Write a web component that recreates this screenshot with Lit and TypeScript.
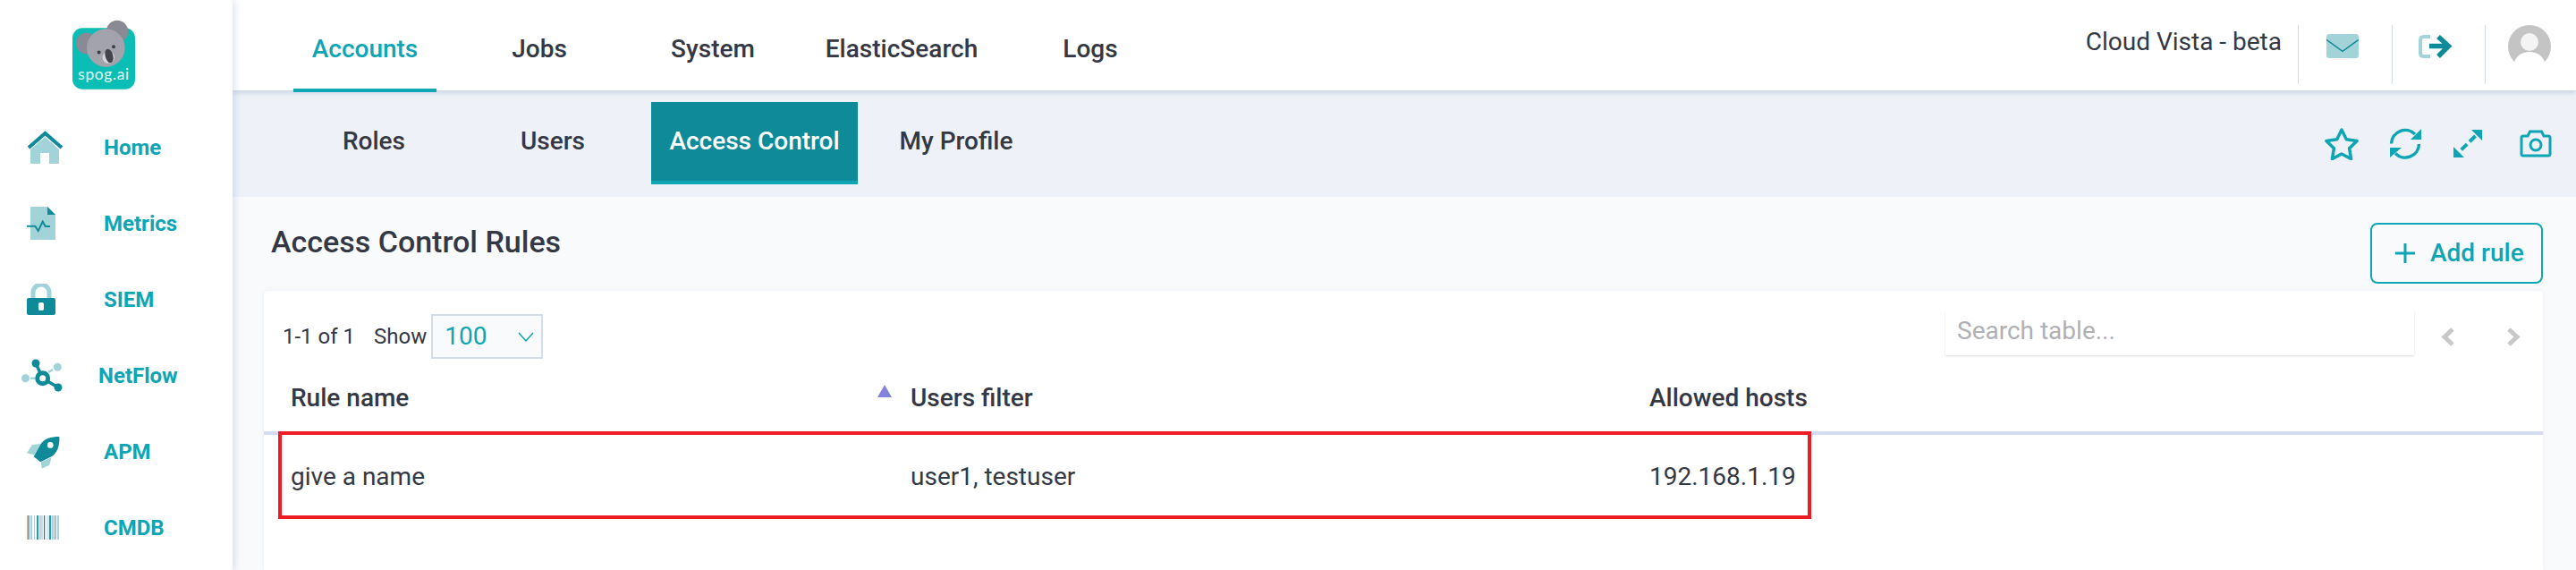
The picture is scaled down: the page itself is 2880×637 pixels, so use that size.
import { css, html, LitElement, svg } from 'lit';
import { customElement } from 'lit/decorators.js';

// [width, colour] runs of the barcode icon, left to right
const barcode: [number, string][] = [
  [1, '#c9b79c'], [2, '#7fa9b8'], [1, '#fff'], [2, '#a9cfe8'], [2, '#fff'], [1, '#a9cfe8'], [2, '#fff'],
  [2, '#0ea5b4'], [1, '#fff'], [2, '#d9c9d4'], [2, '#c4dff0'], [1, '#fff'], [1.500, '#0e8a98'], [2, '#fff'],
  [1, '#a9cfe8'], [1.500, '#e4e4ec'], [2, '#0ea5b4'], [1, '#fff'], [2, '#a9cfe8'], [1, '#fff'], [1.500, '#5f9fb4'],
  [1, '#fff'], [5, '#a9d8e4'],
];

const barcodeRects = () => {
  let x = 0;
  return barcode.map(([w, fill]) => {
    const rect = svg`<rect x=${x} width=${w} height="27" fill=${fill} />`;
    x += w;
    return rect;
  });
};

const navItems = [
  { label: 'Home', icon: svg`<svg class="ico" style="width:41px;height:37px" viewBox="0 0 41 37"><path d="M20.5 7 36 21v14.5q0 1.5-1.500 1.500H25V25H15v12H5.500Q4 37 4 35.500V21Z" fill="#a2d3d8"/><path d="M2 19 20.500 3 39 19" fill="none" stroke="#0e8a98" stroke-width="4"/></svg>` },
  { label: 'Metrics', icon: svg`<svg class="ico" style="width:32px;height:37px" viewBox="0 0 32 37"><path d="M4 1q0-1 1-1h18l9 9v27q0 1-1 1H5q-1 0-1-1Z" fill="#a2d3d8"/><path d="M23 0l9 9h-9Z" fill="#0e8a98"/><path d="M0 21.700h9.300L12.700 27l5-10.300 3 5.300H26" fill="none" stroke="#0e8a98" stroke-width="2"/></svg>` },
  { label: 'SIEM', icon: svg`<svg class="ico" style="width:32px;height:35px" viewBox="0 0 32 35"><path d="M7 17v-7a9 9 0 0 1 18 0v7" fill="none" stroke="#a2d3d8" stroke-width="5"/><rect y="16" width="32" height="19" rx="2" fill="#0e8a98"/><rect x="13" y="21" width="6" height="9" rx="2" fill="#fff"/></svg>` },
  { label: 'NetFlow', shift: true, icon: svg`<svg class="ico" style="width:46px;height:37px" viewBox="0 0 46 37"><circle cx="4.500" cy="21.700" r="4.500" fill="#a2d3d8"/><circle cx="40.300" cy="9.300" r="4.500" fill="#a2d3d8"/><path d="M10 21.700h5M30 15l5-3" stroke="#a2d3d8" stroke-width="2.500"/><path d="M16 5l7.700 16.700L41 32" fill="none" stroke="#0e8a98" stroke-width="3.500"/><circle cx="16" cy="5" r="4.500" fill="#0e8a98"/><circle cx="41" cy="32" r="4.500" fill="#0e8a98"/><circle cx="23.700" cy="21.700" r="6" fill="#fff" stroke="#0e8a98" stroke-width="5"/></svg>` },
  { label: 'APM', icon: svg`<svg class="ico" style="width:37px;height:38px" viewBox="90 450 110 113"><path d="M90 510 108 483 135 480 115 517ZM137 540 172 525 165 550 140 562Z" fill="#a2d3d8"/><path d="M198 456C170 456 148 462 135 482L113 522 135 540 172 522C192 510 200 482 198 456Z" fill="#0e8a98"/><circle cx="168" cy="484" r="10" fill="#fff"/></svg>` },
  { label: 'CMDB', icon: svg`<svg class="ico" style="width:36px;height:27px" viewBox="0 0 36 27">${barcodeRects()}</svg>` },
];

const mainTabs = [
  { label: 'Accounts', width: 160, active: true },
  { label: 'Jobs', width: 230 },
  { label: 'System', width: 158 },
  { label: 'ElasticSearch', width: 264 },
  { label: 'Logs', width: 158 },
];

const subTabs = [
  { label: 'Roles', width: 180 },
  { label: 'Users', width: 220 },
  { label: 'Access Control', width: 231, active: true },
  { label: 'My Profile', width: 220 },
];

@customElement('app-root')
export class AppRoot extends LitElement {
  static override styles = css`
    :host {
      display: grid;
      grid-template-columns: 260px 1fr;
      width: 2880px;
      height: 637px;
      overflow: hidden;
      background: #fff;
      color: #343844;
      font-family: Roboto, 'Liberation Sans', sans-serif;
      font-size: 28px;
      line-height: 32px;
    }
    .sidebar {
      position: relative;
      z-index: 2;
      background: #fff;
      box-shadow: 2px 0 8px rgba(150, 170, 210, 0.35);
    }
    .logo-wrap {
      height: 122px;
      display: flex;
      justify-content: flex-start;
      padding: 22px 0 0 80px;
      box-sizing: border-box;
    }
    .logo {
      width: 72px;
      height: 79px;
    }
    .nav-item {
      height: 85px;
      display: grid;
      grid-template-columns: 92px 1fr;
      padding-left: 24px;
      align-items: center;
      color: #0ea5b4;
      font-size: 24px;
      font-weight: 700;
    }
    .nav-icon {
      display: flex;
      align-items: center;
      height: 100%;
    }
    .nav-icon .ico {
      margin-left: 6px;
    }
    .nav-item.shifted .ico {
      margin-left: 0;
    }
    .nav-item.shifted .nav-label {
      margin-left: -6px;
    }
    .main {
      display: flex;
      flex-direction: column;
      min-width: 0;
    }
    .topbar {
      position: relative;
      z-index: 1;
      height: 101px;
      display: flex;
      padding-left: 68px;
      background: #fff;
      box-shadow: 0 2px 6px rgba(150, 170, 200, 0.5);
      flex: none;
    }
    .main-tab {
      height: 103px;
      box-sizing: border-box;
      padding-top: 11px;
      display: flex;
      align-items: center;
      justify-content: center;
      border-bottom: 4px solid transparent;
      font-weight: 500;
    }
    .main-tab.active {
      color: #0ea5b4;
      border-bottom-color: #0ea5b4;
    }
    .top-right {
      margin-left: auto;
      display: flex;
      align-items: flex-start;
    }
    .project {
      padding-top: 31px;
      margin-right: 18px;
    }
    .top-cell {
      height: 66px;
      margin-top: 28px;
      border-left: 1px solid #d3dbe8;
      box-sizing: border-box;
      display: flex;
      align-items: flex-start;
    }
    .mail {
      width: 105px;
      padding: 10px 0 0 31px;
    }
    .logout {
      width: 104px;
      padding: 10px 0 0 29px;
    }
    .user {
      width: 102px;
      padding-left: 25px;
    }
    .subbar {
      flex: none;
      height: 119px;
      box-sizing: border-box;
      padding: 13px 27px 13px 68px;
      background: #eef1f8;
      display: flex;
      align-items: stretch;
    }
    .sub-tab {
      box-sizing: border-box;
      height: 92px;
      display: flex;
      align-items: center;
      justify-content: center;
      border-bottom: 4px solid transparent;
      font-weight: 500;
    }
    .sub-tab.active {
      background: #0e8a98;
      border-bottom-color: #0ea5b4;
      color: #fff;
    }
    .tools {
      margin-left: auto;
      display: flex;
      align-items: center;
    }
    .tools svg {
      display: block;
    }
    .tool-star {
      margin-right: 34px;
    }
    .tool-sync {
      margin-right: 36px;
    }
    .tool-expand {
      margin-right: 42px;
    }
    .content {
      flex: 1;
      display: flex;
      flex-direction: column;
      background: #f9fafc;
      min-height: 0;
    }
    .page-head {
      flex: none;
      height: 105px;
      box-sizing: border-box;
      padding: 29px 37px 0 43px;
      display: flex;
      justify-content: space-between;
      align-items: flex-start;
    }
    .page-title {
      margin: 1px 0 0;
      font-size: 34px;
      line-height: 40px;
      font-weight: 500;
    }
    .add-btn {
      width: 193px;
      height: 68px;
      box-sizing: border-box;
      border: 2px solid #0ea5b4;
      border-radius: 8px;
      display: flex;
      align-items: center;
      gap: 17px;
      padding-left: 26px;
      color: #0ea5b4;
      font-weight: 500;
    }
    .card {
      position: relative;
      flex: 1;
      margin: 0 37px 0 35px;
      background: #fff;
      border-radius: 4px 4px 0 0;
      box-shadow: 0 0 4px rgba(180, 190, 215, 0.25);
    }
    .toolbar {
      height: 100px;
      box-sizing: border-box;
      padding: 26px 25px 0 21px;
      display: flex;
      align-items: flex-start;
    }
    .count {
      height: 50px;
      display: flex;
      align-items: center;
      font-size: 24px;
    }
    .count-range {
      margin-right: 21px;
    }
    .select {
      width: 125px;
      height: 50px;
      margin-left: 5px;
      box-sizing: border-box;
      border: 2px solid #d5dce9;
      background: #f9fafc;
      display: flex;
      align-items: center;
      justify-content: space-between;
      padding: 0 8px 0 13px;
      color: #0ea5b4;
    }
    .search {
      margin: -4px 0 0 auto;
      width: 524px;
      height: 50px;
      box-sizing: border-box;
      padding: 7px 13px 0;
      color: #b0b0b5;
      background: #fff;
      box-shadow: 0 1px 2px rgba(120, 120, 130, 0.25);
    }
    .pager {
      display: flex;
      align-items: center;
      gap: 57px;
      height: 50px;
      margin-left: 30px;
    }
    .thead,
    .row {
      display: grid;
      grid-template-columns: 723px 826px 1fr;
    }
    .thead {
      height: 61px;
      box-sizing: border-box;
      padding-top: 4px;
      border-bottom: 4px solid #d5dcef;
      font-weight: 500;
      align-items: start;
    }
    .cell {
      padding-left: 30px;
    }
    .cell + .cell {
      padding-left: 0;
    }
    .sorted {
      display: flex;
      justify-content: space-between;
      padding-right: 21px;
    }
    .sort-mark {
      width: 0;
      height: 0;
      margin-top: 1px;
      border-left: 8.500px solid transparent;
      border-right: 8.500px solid transparent;
      border-bottom: 14px solid #8484dc;
    }
    .row {
      height: 94px;
      align-items: center;
    }
    .highlight {
      position: absolute;
      left: 16px;
      top: 157px;
      width: 1714px;
      height: 98px;
      box-sizing: border-box;
      border: 4px solid #ed1c24;
      pointer-events: none;
    }
  `;

  override render() {
    return html`
      <aside class="sidebar">
        <div class="logo-wrap">
          <svg class="logo" viewBox="240 66 216 236">
            <rect x="243" y="93" width="210" height="206" rx="34" fill="#0abdb5" />
            <circle cx="290" cy="145" r="35" fill="#8a8a94" />
            <circle cx="393" cy="105" r="37" fill="#8a8a94" />
            <circle cx="355" cy="160" r="64" fill="#a3a3ad" />
            <circle cx="332" cy="175" r="6" fill="#3f3f4c" />
            <circle cx="381" cy="156" r="6" fill="#3f3f4c" />
            <circle cx="364" cy="192" r="20" fill="#d5d5da" />
            <ellipse cx="366" cy="187" rx="13" ry="24" transform="rotate(-15 366 187)" fill="#44444f" />
            <text x="348" y="268" text-anchor="middle" font-family="Lato, sans-serif" font-size="52" fill="#e6fbfa" letter-spacing="2">spog.ai</text>
          </svg>
        </div>
        ${navItems.map(
          item => html`
            <div class="nav-item ${item.shift ? 'shifted' : ''}">
              <div class="nav-icon">${item.icon}</div>
              <div class="nav-label">${item.label}</div>
            </div>
          `
        )}
      </aside>
      <div class="main">
        <header class="topbar">
          ${mainTabs.map(
            tab => html`<div class="main-tab ${tab.active ? 'active' : ''}" style="width:${tab.width}px">${tab.label}</div>`
          )}
          <div class="top-right">
            <div class="project">Cloud Vista - beta</div>
            <div class="top-cell mail">
              <svg width="36" height="27" viewBox="0 0 36 27">
                <rect width="36" height="27" rx="3" fill="#a2d3d8" />
                <path d="M0 6.300 18 19.300 36 6.300" fill="none" stroke="#0e8a98" stroke-width="1.500" />
              </svg>
            </div>
            <div class="top-cell logout">
              <svg width="38" height="28" viewBox="0 0 38 28">
                <path d="M13 3H6Q2 3 2 7V21Q2 25 6 25H13" fill="none" stroke="#a2d3d8" stroke-width="4" />
                <path d="M12 13.500H33M22 3 33.500 13.500 22 25" fill="none" stroke="#0e8a98" stroke-width="5.500" />
              </svg>
            </div>
            <div class="top-cell user">
              <svg width="48" height="43" viewBox="0 0 48 43">
                <circle cx="24" cy="24" r="24" fill="#c4c4c4" />
                <circle cx="24" cy="19" r="10" fill="#f4f4f4" />
                <ellipse cx="24" cy="44" rx="17" ry="14" fill="#fff" />
              </svg>
            </div>
          </div>
        </header>
        <nav class="subbar">
          ${subTabs.map(
            tab => html`<div class="sub-tab ${tab.active ? 'active' : ''}" style="width:${tab.width}px">${tab.label}</div>`
          )}
          <div class="tools">
            <svg class="tool-star" width="38" height="36" viewBox="0 0 38 36">
              <path d="M19 2 24.300 12.700 36.100 14.400 27.600 22.800 29.600 34.600 19 29 8.400 34.600 10.400 22.800 1.900 14.400 13.700 12.700Z" fill="none" stroke="#0ea5b4" stroke-width="3.500" stroke-linejoin="round" />
            </svg>
            <svg class="tool-sync" width="36" height="35" viewBox="0 0 36 35">
              <path d="M2.500 17.500A15.500 15.500 0 0 1 29 7M33.500 18A15.500 15.500 0 0 1 7 28.500" fill="none" stroke="#0ea5b4" stroke-width="3.500" />
              <path d="M24 13H36V1ZM1 33V22H14Z" fill="#0ea5b4" />
            </svg>
            <svg class="tool-expand" width="32" height="31" viewBox="0 0 32 31">
              <path d="M32 0V12L20 0ZM0 31V19L12 31Z" fill="#0ea5b4" />
              <path d="M24.500 7 6.500 24.500" stroke="#0ea5b4" stroke-width="4" stroke-dasharray="9 4 9" />
            </svg>
            <svg width="36" height="31" viewBox="0 0 36 31">
              <path d="M2 9Q2 7 4 7H9L11.500 2H24.500L27 7H32Q34 7 34 9V27Q34 29 32 29H4Q2 29 2 27Z" fill="none" stroke="#0ea5b4" stroke-width="3" />
              <circle cx="18" cy="17" r="6" fill="none" stroke="#0ea5b4" stroke-width="3" />
            </svg>
          </div>
        </nav>
        <main class="content">
          <div class="page-head">
            <h1 class="page-title">Access Control Rules</h1>
            <div class="add-btn">
              <svg width="22" height="22" viewBox="0 0 22 22"><path d="M11 0V22M0 11H22" stroke="#0ea5b4" stroke-width="3" /></svg>
              Add rule
            </div>
          </div>
          <section class="card">
            <div class="toolbar">
              <div class="count">
                <span class="count-range">1-1 of 1</span>
                <span>Show</span>
              </div>
              <div class="select">
                100
                <svg width="18" height="11" viewBox="0 0 18 11"><path d="M1 1 9 10 17 1" fill="none" stroke="#0ea5b4" stroke-width="1.500" /></svg>
              </div>
              <div class="search">Search table...</div>
              <div class="pager">
                <svg width="16" height="21" viewBox="0 0 16 21"><path d="M13 2 4 10.500 13 19" fill="none" stroke="#c8c8c8" stroke-width="5" /></svg>
                <svg width="16" height="21" viewBox="0 0 16 21"><path d="M3 2 12 10.500 3 19" fill="none" stroke="#c8c8c8" stroke-width="5" /></svg>
              </div>
            </div>
            <div class="thead">
              <div class="cell sorted">Rule name<span class="sort-mark"></span></div>
              <div class="cell">Users filter</div>
              <div class="cell">Allowed hosts</div>
            </div>
            <div class="row">
              <div class="cell">give a name</div>
              <div class="cell">user1, testuser</div>
              <div class="cell">192.168.1.19</div>
            </div>
            <div class="highlight"></div>
          </section>
        </main>
      </div>
    `;
  }
}
